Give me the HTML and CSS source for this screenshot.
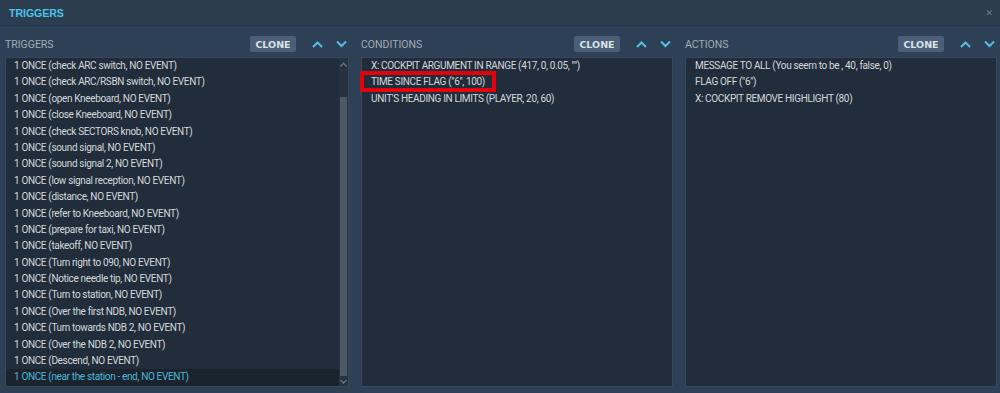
FILE: index.html
```html
<!DOCTYPE html>
<html lang="en">
<head>
    <meta charset="UTF-8">
    <meta name="viewport" content="width=device-width, initial-scale=1.0">
    <title>Triggers</title>
    <link rel="stylesheet" href="styles.css">
</head>
<body>
    <div class="titlebar">
        <span class="title">TRIGGERS</span>
        <span class="close">&#x2715;</span>
    </div>

    <div class="editor">
        <!-- triggers -->
        <div class="panel">
            <div class="panel-head">
                <span class="label">TRIGGERS</span>
                <button class="clone">CLONE</button>
                <span class="arrows">
                    <svg width="11" height="8" viewBox="0 0 11 8"><polyline points="1,7 5.5,2.5 10,7"/></svg>
                    <svg width="11" height="8" viewBox="0 0 11 8"><polyline points="1,1.5 5.5,6 10,1.5"/></svg>
                </span>
            </div>
            <div class="box">
                <ul class="list">
                    <li>1 ONCE (check ARC switch, NO EVENT)</li>
                    <li>1 ONCE (check ARC/RSBN switch, NO EVENT)</li>
                    <li>1 ONCE (open Kneeboard, NO EVENT)</li>
                    <li>1 ONCE (close Kneeboard, NO EVENT)</li>
                    <li>1 ONCE (check SECTORS knob, NO EVENT)</li>
                    <li>1 ONCE (sound signal, NO EVENT)</li>
                    <li>1 ONCE (sound signal 2, NO EVENT)</li>
                    <li>1 ONCE (low signal reception, NO EVENT)</li>
                    <li>1 ONCE (distance, NO EVENT)</li>
                    <li>1 ONCE (refer to Kneeboard, NO EVENT)</li>
                    <li>1 ONCE (prepare for taxi, NO EVENT)</li>
                    <li>1 ONCE (takeoff, NO EVENT)</li>
                    <li>1 ONCE (Turn right to 090, NO EVENT)</li>
                    <li>1 ONCE (Notice needle tip, NO EVENT)</li>
                    <li>1 ONCE (Turn to station, NO EVENT)</li>
                    <li>1 ONCE (Over the first NDB, NO EVENT)</li>
                    <li>1 ONCE (Turn towards NDB 2, NO EVENT)</li>
                    <li>1 ONCE (Over the NDB 2, NO EVENT)</li>
                    <li>1 ONCE (Descend, NO EVENT)</li>
                    <li class="selected">1 ONCE (near the station - end, NO EVENT)</li>
                </ul>
                <div class="scroll">
                    <span class="scroll-btn">
                        <svg width="7" height="5" viewBox="0 0 7 5"><polyline points="0.5,4.5 3.5,1.2 6.5,4.5"/></svg>
                    </span>
                    <div class="track"><div class="thumb"></div></div>
                    <span class="scroll-btn">
                        <svg width="7" height="5" viewBox="0 0 7 5"><polyline points="0.5,0.8 3.5,4 6.5,0.8"/></svg>
                    </span>
                </div>
            </div>
        </div>

        <!-- conditions -->
        <div class="panel">
            <div class="panel-head">
                <span class="label">CONDITIONS</span>
                <button class="clone">CLONE</button>
                <span class="arrows">
                    <svg width="11" height="8" viewBox="0 0 11 8"><polyline points="1,7 5.5,2.5 10,7"/></svg>
                    <svg width="11" height="8" viewBox="0 0 11 8"><polyline points="1,1.5 5.5,6 10,1.5"/></svg>
                </span>
            </div>
            <div class="box">
                <ul class="list wide">
                    <li>X: COCKPIT ARGUMENT IN RANGE (417, 0, 0.05, "")</li>
                    <li><span class="marked">TIME SINCE FLAG ("6", 100)</span></li>
                    <li>UNIT'S HEADING IN LIMITS (PLAYER, 20, 60)</li>
                </ul>
            </div>
        </div>

        <!-- actions -->
        <div class="panel">
            <div class="panel-head">
                <span class="label">ACTIONS</span>
                <button class="clone">CLONE</button>
                <span class="arrows">
                    <svg width="11" height="8" viewBox="0 0 11 8"><polyline points="1,7 5.5,2.5 10,7"/></svg>
                    <svg width="11" height="8" viewBox="0 0 11 8"><polyline points="1,1.5 5.5,6 10,1.5"/></svg>
                </span>
            </div>
            <div class="box">
                <ul class="list wide">
                    <li>MESSAGE TO ALL (You seem to be , 40, false, 0)</li>
                    <li>FLAG OFF ("6")</li>
                    <li>X: COCKPIT REMOVE HIGHLIGHT (80)</li>
                </ul>
            </div>
        </div>
    </div>
</body>
</html>
```

FILE: styles.css
```css
body {
    margin: 0;
    background: #2e4055;
    font-family: Roboto, "Liberation Sans", sans-serif;
    color: #d3d8dd;
    height: 393px;
    overflow: hidden;
}

.titlebar {
    height: 25px;
    background: #2c3d50;
    border-bottom: 1px solid #26364a;
    display: flex;
    align-items: center;
    justify-content: space-between;
    padding: 0 7px 0 9px;
}

.title {
    color: #4ec2e8;
    font-family: "Liberation Sans", sans-serif;
    font-weight: bold;
    font-size: 10.5px;
}

.close {
    color: #6a7c90;
    font-size: 9px;
    font-family: "DejaVu Sans", sans-serif;
}

.editor {
    display: grid;
    grid-template-columns: 344px 312px 312px;
    column-gap: 12px;
    padding: 10px 0 0 5px;
}

.panel-head {
    display: flex;
    align-items: center;
    height: 16px;
    margin-bottom: 5px;
    padding-right: 2px;
}

.label {
    flex: 1;
    color: #a2acb7;
    font-size: 10.5px;
}

.clone {
    width: 46px;
    height: 16px;
    border: none;
    border-radius: 2px;
    background: #4a5f77;
    color: #dbe2e8;
    font-family: "DejaVu Sans", sans-serif;
    font-weight: bold;
    font-size: 9.5px;
    padding: 0;
}

.arrows {
    display: flex;
    gap: 13px;
    margin-left: 16px;
}

.arrows svg {
    display: block;
}

.arrows polyline {
    fill: none;
    stroke: #55bfe4;
    stroke-width: 2;
}

.box {
    display: flex;
    height: 328px;
    background: #222d3b;
    border: 1px solid #34475d;
}

.list {
    flex: 1;
    list-style: none;
    margin: 0;
    padding: 0;
}

.list li {
    height: 16.4px;
    line-height: 16.4px;
    padding-left: 8px;
    font-size: 10px;
    letter-spacing: -0.35px;
    white-space: nowrap;
}

.list.wide li {
    padding-left: 9px;
}

.list li.selected {
    background: #1b232d;
    color: #4db6dc;
}

.marked {
    position: relative;
}

.marked::after {
    content: "";
    position: absolute;
    top: -5px;
    bottom: -5px;
    left: -11px;
    right: -11px;
    border: 4px solid #e4000c;
}

.scroll {
    width: 9px;
    display: flex;
    flex-direction: column;
    background: #263241;
}

.scroll-btn {
    height: 10px;
    display: flex;
    align-items: center;
    justify-content: center;
}

.scroll-btn:first-child {
    height: 12px;
}

.scroll-btn polyline {
    fill: none;
    stroke: #6d7886;
    stroke-width: 1.2;
}

.track {
    flex: 1;
    padding: 27px 1px 0 1px;
    display: flex;
}

.thumb {
    flex: 1;
    background: #4b5866;
}
```
